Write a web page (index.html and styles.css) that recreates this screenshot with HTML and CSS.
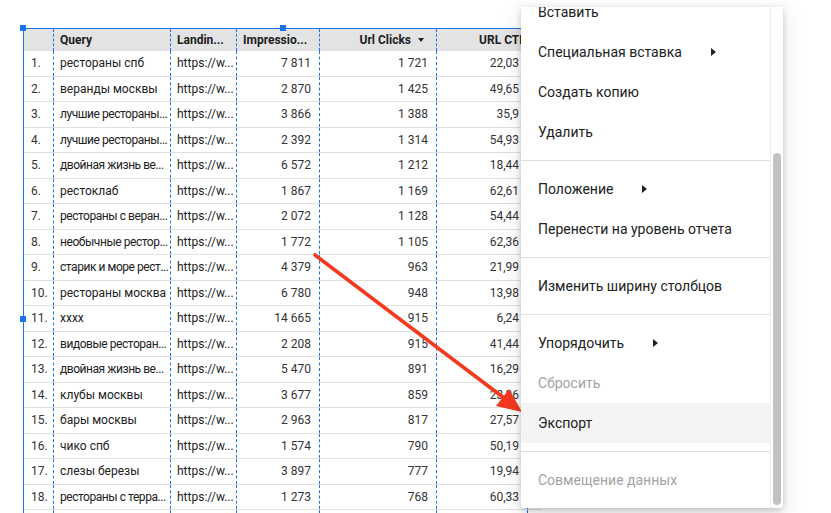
FILE: index.html
```html
<!DOCTYPE html>
<html lang="ru">
<head>
<meta charset="utf-8">
<title>Таблица</title>
<link rel="stylesheet" href="styles.css">
</head>
<body>
<div class="canvas">
  <div class="chart">
    <span class="handle h-top-left"></span>
    <span class="handle h-top-mid"></span>
    <span class="handle h-mid-left"></span>
    <div class="row head">
      <div class="cell num"></div>
      <div class="cell dim">Query</div>
      <div class="cell dim">Landin...</div>
      <div class="cell dim">Impressio...</div>
      <div class="cell metric sorted">Url Clicks <span class="sort-caret"></span></div>
      <div class="cell metric last-head">URL CTR</div>
      <div class="cell extra"></div>
    </div>
    <div class="row"><div class="cell num">1.</div><div class="cell dim">рестораны спб</div><div class="cell dim">https://w...</div><div class="cell metric">7&nbsp;811</div><div class="cell metric">1&nbsp;721</div><div class="cell metric">22,03</div><div class="cell extra"></div></div>
    <div class="row"><div class="cell num">2.</div><div class="cell dim">веранды москвы</div><div class="cell dim">https://w...</div><div class="cell metric">2&nbsp;870</div><div class="cell metric">1&nbsp;425</div><div class="cell metric">49,65</div><div class="cell extra"></div></div>
    <div class="row"><div class="cell num">3.</div><div class="cell dim cut">лучшие рестораны...</div><div class="cell dim">https://w...</div><div class="cell metric">3&nbsp;866</div><div class="cell metric">1&nbsp;388</div><div class="cell metric">35,9</div><div class="cell extra"></div></div>
    <div class="row"><div class="cell num">4.</div><div class="cell dim cut">лучшие рестораны...</div><div class="cell dim">https://w...</div><div class="cell metric">2&nbsp;392</div><div class="cell metric">1&nbsp;314</div><div class="cell metric">54,93</div><div class="cell extra"></div></div>
    <div class="row"><div class="cell num">5.</div><div class="cell dim cut">двойная жизнь ве...</div><div class="cell dim">https://w...</div><div class="cell metric">6&nbsp;572</div><div class="cell metric">1&nbsp;212</div><div class="cell metric">18,44</div><div class="cell extra"></div></div>
    <div class="row"><div class="cell num">6.</div><div class="cell dim">рестоклаб</div><div class="cell dim">https://w...</div><div class="cell metric">1&nbsp;867</div><div class="cell metric">1&nbsp;169</div><div class="cell metric">62,61</div><div class="cell extra"></div></div>
    <div class="row"><div class="cell num">7.</div><div class="cell dim cut">рестораны с веран...</div><div class="cell dim">https://w...</div><div class="cell metric">2&nbsp;072</div><div class="cell metric">1&nbsp;128</div><div class="cell metric">54,44</div><div class="cell extra"></div></div>
    <div class="row"><div class="cell num">8.</div><div class="cell dim cut">необычные рестор...</div><div class="cell dim">https://w...</div><div class="cell metric">1&nbsp;772</div><div class="cell metric">1&nbsp;105</div><div class="cell metric">62,36</div><div class="cell extra"></div></div>
    <div class="row"><div class="cell num">9.</div><div class="cell dim cut">старик и море рест...</div><div class="cell dim">https://w...</div><div class="cell metric">4&nbsp;379</div><div class="cell metric">963</div><div class="cell metric">21,99</div><div class="cell extra"></div></div>
    <div class="row"><div class="cell num">10.</div><div class="cell dim">рестораны москва</div><div class="cell dim">https://w...</div><div class="cell metric">6&nbsp;780</div><div class="cell metric">948</div><div class="cell metric">13,98</div><div class="cell extra"></div></div>
    <div class="row"><div class="cell num">11.</div><div class="cell dim">xxxx</div><div class="cell dim">https://w...</div><div class="cell metric">14&nbsp;665</div><div class="cell metric">915</div><div class="cell metric">6,24</div><div class="cell extra"></div></div>
    <div class="row"><div class="cell num">12.</div><div class="cell dim cut">видовые ресторан...</div><div class="cell dim">https://w...</div><div class="cell metric">2&nbsp;208</div><div class="cell metric">915</div><div class="cell metric">41,44</div><div class="cell extra"></div></div>
    <div class="row"><div class="cell num">13.</div><div class="cell dim cut">двойная жизнь ве...</div><div class="cell dim">https://w...</div><div class="cell metric">5&nbsp;470</div><div class="cell metric">891</div><div class="cell metric">16,29</div><div class="cell extra"></div></div>
    <div class="row"><div class="cell num">14.</div><div class="cell dim">клубы москвы</div><div class="cell dim">https://w...</div><div class="cell metric">3&nbsp;677</div><div class="cell metric">859</div><div class="cell metric">23,36</div><div class="cell extra"></div></div>
    <div class="row"><div class="cell num">15.</div><div class="cell dim">бары москвы</div><div class="cell dim">https://w...</div><div class="cell metric">2&nbsp;963</div><div class="cell metric">817</div><div class="cell metric">27,57</div><div class="cell extra"></div></div>
    <div class="row"><div class="cell num">16.</div><div class="cell dim">чико спб</div><div class="cell dim">https://w...</div><div class="cell metric">1&nbsp;574</div><div class="cell metric">790</div><div class="cell metric">50,19</div><div class="cell extra"></div></div>
    <div class="row"><div class="cell num">17.</div><div class="cell dim">слезы березы</div><div class="cell dim">https://w...</div><div class="cell metric">3&nbsp;897</div><div class="cell metric">777</div><div class="cell metric">19,94</div><div class="cell extra"></div></div>
    <div class="row"><div class="cell num">18.</div><div class="cell dim cut">рестораны с терра...</div><div class="cell dim">https://w...</div><div class="cell metric">1&nbsp;273</div><div class="cell metric">768</div><div class="cell metric">60,33</div><div class="cell extra"></div></div>
    <div class="row"><div class="cell num"></div><div class="cell dim"></div><div class="cell dim"></div><div class="cell metric"></div><div class="cell metric"></div><div class="cell metric"></div><div class="cell extra"></div></div>
  </div>

  <svg class="annotation" width="831" height="513" viewBox="0 0 831 513">
    <line x1="315" y1="255" x2="504" y2="398" stroke="#f5391f" stroke-width="3.6" stroke-linecap="round"/>
    <polygon points="522,412 496,406 509,389" fill="#f5391f"/>
  </svg>

  <div class="menu">
    <div class="menu-body">
      <ul class="menu-list">
        <li class="item">Вставить</li>
        <li class="item">Специальная вставка<span class="sub"></span></li>
        <li class="item">Создать копию</li>
        <li class="item">Удалить</li>
        <li class="sep"></li>
        <li class="item">Положение<span class="sub"></span></li>
        <li class="item">Перенести на уровень отчета</li>
        <li class="sep"></li>
        <li class="item">Изменить ширину столбцов</li>
        <li class="sep"></li>
        <li class="item">Упорядочить<span class="sub"></span></li>
        <li class="item disabled">Сбросить</li>
        <li class="item hover">Экспорт</li>
        <li class="sep"></li>
        <li class="item disabled">Совмещение данных</li>
      </ul>
    </div>
    <div class="menu-scroll"><div class="thumb"></div></div>
  </div>
</div>
</body>
</html>
```
FILE: styles.css
```css
html, body {
  margin: 0;
  padding: 0;
  background: #ffffff;
}
body {
  font-family: Roboto, "Noto Sans", "Liberation Sans", sans-serif;
  color: #212121;
  overflow: hidden;
  width: 831px;
  height: 513px;
}
.canvas {
  position: relative;
  width: 831px;
  height: 513px;
  padding: 28px 0 0 23px;
  box-sizing: border-box;
  overflow: hidden;
}
.chart {
  position: relative;
  width: 519px;
  border-top: 1px solid #1a73e8;
  border-left: 1px solid #1a73e8;
  box-sizing: border-box;
}
.handle {
  position: absolute;
  width: 6px;
  height: 6px;
  background: #1a73e8;
  z-index: 2;
}
.h-top-left { left: -4px; top: -4px; }
.h-top-mid { left: 256px; top: -4px; }
.h-mid-left { left: -4px; top: 287px; }

.row {
  display: grid;
  grid-template-columns: 29px 117px 66px 83px 117px 91px 16px;
  height: 25.5px;
  border-bottom: 1px solid #e0e0e0;
  box-sizing: border-box;
  font-size: 12px;
}
.row.head {
  height: 22px;
  background: #e3e3e3;
  border-bottom: none;
  font-weight: 700;
  color: #202020;
}
.cell {
  display: flex;
  align-items: center;
  padding: 0 6px;
  white-space: nowrap;
  overflow: hidden;
  border-left: 1px dashed #1a73e8;
  box-sizing: border-box;
}
.cell.dim {
  padding-right: 0;
  font-size: 12px;
}
.cell.dim.cut {
  letter-spacing: -0.45px;
}
.cell.num {
  border-left: none;
  padding-left: 7px;
  color: #333;
}
.cell.metric {
  justify-content: flex-end;
  padding-right: 8px;
  color: #333;
}
.row.head .cell.metric { color: #202020; }
.row.head .cell.last-head {
  padding-right: 0;
  overflow: visible;
}
.cell.extra { padding: 0; }
.sort-caret {
  display: inline-block;
  width: 0;
  height: 0;
  margin-left: 7px;
  margin-right: 4px;
  border-left: 3px solid transparent;
  border-right: 3px solid transparent;
  border-top: 4px solid #202020;
}

.annotation {
  position: absolute;
  left: 0;
  top: 0;
  z-index: 3;
  pointer-events: none;
}

.menu {
  position: absolute;
  left: 521px;
  top: 7px;
  width: 262px;
  height: 501px;
  background: #fff;
  display: flex;
  z-index: 5;
  box-shadow: 0 2px 6px rgba(0,0,0,0.18), 0 6px 22px rgba(0,0,0,0.12);
  border-radius: 0 0 3px 3px;
  overflow: hidden;
}
.menu-body {
  width: 249px;
  overflow: hidden;
  border-right: 1px solid #ececec;
}
.menu-list {
  list-style: none;
  margin: -15px 0 0 0;
  padding: 0;
}
.item {
  height: 40px;
  display: flex;
  align-items: center;
  padding-left: 17px;
  font-size: 14px;
  color: #212121;
  white-space: nowrap;
}
.item.disabled { color: #a3a3a3; }
.item.hover { background: #f4f4f4; }
.sub {
  display: inline-block;
  width: 0;
  height: 0;
  margin-left: 29px;
  border-top: 4px solid transparent;
  border-bottom: 4px solid transparent;
  border-left: 5px solid #202020;
}
.sep {
  height: 1px;
  background: #e0e0e0;
  margin: 8px 0;
}
.menu-scroll {
  flex: 1;
  padding: 146px 0 0 2px;
  box-sizing: border-box;
}
.thumb {
  width: 8px;
  height: 352px;
  border-radius: 4px;
  background: #c2c2c2;
}
```
